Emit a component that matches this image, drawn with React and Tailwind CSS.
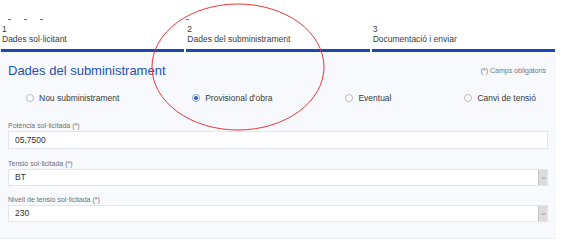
const steps = [
  { n: '1', label: 'Dades sol·licitant', dash: true },
  { n: '2', label: 'Dades del subministrament', dash: true },
  { n: '3', label: 'Documentació i enviar', dash: false },
];

const radios = [
  { label: 'Nou subministrament', checked: false },
  { label: "Provisional d'obra", checked: true },
  { label: 'Eventual', checked: false },
  { label: 'Canvi de tensió', checked: false },
];

function Radio({ label, checked }) {
  return (
    <label className="flex items-center gap-[5px] text-[8.5px] text-[#3a3a3a]">
      <span
        className={`w-[8px] h-[8px] rounded-full border flex items-center justify-center bg-white ${
          checked ? 'border-[#8aa4d6]' : 'border-[#b8b8b8]'
        }`}
      >
        {checked && <span className="w-[4px] h-[4px] rounded-full bg-[#2a5bc4]" />}
      </span>
      {label}
    </label>
  );
}

function Field({ label, value, select, className = '' }) {
  return (
    <div className={className}>
      <p className="text-[7px] leading-[10px] text-[#707070]">{label}</p>
      <div
        className={`flex items-center bg-white border border-[#e2e5ec] ${
          select ? 'h-[17px]' : 'h-[18px]'
        }`}
      >
        <span className="flex-1 pl-[6px] text-[8.5px] text-[#333]">{value}</span>
        {select && (
          <span className="w-[9px] h-full bg-[#dcdcdc] border-l border-[#c4c4c4] flex items-center justify-center">
            <svg width="5" height="4" viewBox="0 0 5 4">
              <path d="M0.5 1 L2.5 3 L4.5 1" fill="none" stroke="#8a8a8a" strokeWidth="0.8" />
            </svg>
          </span>
        )}
      </div>
    </div>
  );
}

export default function App() {
  return (
    <div className="relative w-[567px] h-[243px] bg-white overflow-hidden font-['Liberation_Sans',Arial,sans-serif]">
      {/* pestanyes del formulari */}
      <div className="flex gap-[2px] pl-[1px] pt-[18px] w-[555px]">
        {steps.map((s) => (
          <div key={s.n} className="flex-1 flex flex-col">
            <div className="h-[3px] flex gap-[13px] pl-[7px] pt-[1px]">
              {s.n === '1' &&
                [0, 1, 2].map((i) => <span key={i} className="w-[3px] h-[1px] bg-[#777]" />)}
              {s.n === '2' && <span className="w-[3px] h-[1px] bg-[#777] -ml-[7px]" />}
            </div>
            <p className="mt-[3px] pl-[1px] text-[8.5px] leading-[10px] text-[#3c3c3c]">{s.n}</p>
            <p className="pl-[1px] text-[8.5px] leading-[10px] text-[#3c3c3c]">{s.label}</p>
            <div className="mt-[5px] h-[3px] bg-[#1b47b3]" />
          </div>
        ))}
      </div>

      {/* bloc de dades */}
      <div className="w-[556px] h-[187px] bg-[#f7f9fd] border-b border-dotted border-[#dfe3ec] px-2 pt-[10px]">
        <div className="flex items-center justify-between h-[18px]">
          <h2 className="text-[13px] text-[#2350b9]">Dades del subministrament</h2>
          <span className="mr-[2px] text-[7px] text-[#777]">(*) Camps obligatoris</span>
        </div>

        <div className="mt-[11px] h-[14px] flex items-center justify-between pl-[18px] pr-[12px]">
          {radios.map((r) => (
            <Radio key={r.label} {...r} />
          ))}
        </div>

        <div>
          <Field className="mt-[16px]" label="Potència sol·licitada (*)" value="05,7500" />
          <Field className="mt-[10px]" label="Tensió sol·licitada (*)" value="BT" select />
          <Field className="mt-[9px]" label="Nivell de tensió sol·licitada (*)" value="230" select />
        </div>
      </div>

      {/* marca vermella a mà */}
      <svg className="absolute left-0 top-0 pointer-events-none" width="567" height="243">
        <ellipse cx="238" cy="67" rx="86" ry="63" fill="none" stroke="#e8373c" strokeWidth="1" />
      </svg>
    </div>
  );
}
